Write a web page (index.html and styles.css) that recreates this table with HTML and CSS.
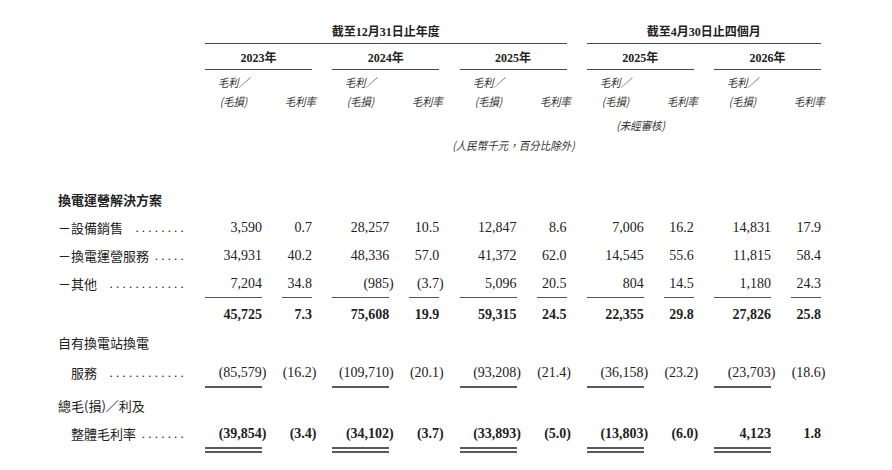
FILE: index.html
```html
<!DOCTYPE html>
<html lang="zh-Hant">
<head>
<meta charset="utf-8">
<title>毛利表</title>
<link rel="stylesheet" href="styles.css">
</head>
<body>
<div class="page">
  <div class="hrow h1">
    <div class="lbl"></div>
    <div class="grps">
      <div class="span3">截至12月31日止年度</div>
      <div class="span2">截至4月30日止四個月</div>
    </div>
  </div>
  <div class="hrow h2">
    <div class="lbl"></div>
    <div class="grps">
      <div class="yr">2023年</div>
      <div class="yr">2024年</div>
      <div class="yr">2025年</div>
      <div class="yr">2025年</div>
      <div class="yr">2026年</div>
    </div>
  </div>
  <div class="hrow h3">
    <div class="lbl"></div>
    <div class="grps">
      <div class="hgrp"><span class="hamt"><span class="ln">毛利／</span><span class="ln">(毛損)</span></span><span class="hpct">毛利率</span></div>
      <div class="hgrp"><span class="hamt"><span class="ln">毛利／</span><span class="ln">(毛損)</span></span><span class="hpct">毛利率</span></div>
      <div class="hgrp"><span class="hamt"><span class="ln">毛利／</span><span class="ln">(毛損)</span></span><span class="hpct">毛利率</span></div>
      <div class="hgrp"><span class="hamt"><span class="ln">毛利／</span><span class="ln">(毛損)</span></span><span class="hpct">毛利率</span></div>
      <div class="hgrp"><span class="hamt"><span class="ln">毛利／</span><span class="ln">(毛損)</span></span><span class="hpct">毛利率</span></div>
    </div>
  </div>
  <div class="hrow h4">
    <div class="lbl"></div>
    <div class="grps">
      <div class="note"></div>
      <div class="note"></div>
      <div class="note"></div>
      <div class="note"><span class="nt">(未經審核)</span></div>
      <div class="note"></div>
    </div>
  </div>
  <div class="hrow h5">
    <div class="lbl"></div>
    <div class="grps">
      <div class="note"></div>
      <div class="note"></div>
      <div class="note"><span class="nt">(人民幣千元，百分比除外)</span></div>
      <div class="note"></div>
      <div class="note"></div>
    </div>
  </div>

  <div class="row sec first">
    <div class="lbl"><span class="t b">換電運營解決方案</span></div>
  </div>

  <div class="row">
    <div class="lbl"><span class="t">－設備銷售</span><span class="dots">........</span></div>
    <div class="grps">
      <div class="grp"><span class="amt">3,590</span><span class="pct">0.7</span></div>
      <div class="grp"><span class="amt">28,257</span><span class="pct">10.5</span></div>
      <div class="grp"><span class="amt">12,847</span><span class="pct">8.6</span></div>
      <div class="grp"><span class="amt">7,006</span><span class="pct">16.2</span></div>
      <div class="grp"><span class="amt">14,831</span><span class="pct">17.9</span></div>
    </div>
  </div>

  <div class="row">
    <div class="lbl"><span class="t">－換電運營服務</span><span class="dots">.....</span></div>
    <div class="grps">
      <div class="grp"><span class="amt">34,931</span><span class="pct">40.2</span></div>
      <div class="grp"><span class="amt">48,336</span><span class="pct">57.0</span></div>
      <div class="grp"><span class="amt">41,372</span><span class="pct">62.0</span></div>
      <div class="grp"><span class="amt">14,545</span><span class="pct">55.6</span></div>
      <div class="grp"><span class="amt">11,815</span><span class="pct">58.4</span></div>
    </div>
  </div>

  <div class="row ulrow">
    <div class="lbl"><span class="t">－其他</span><span class="dots">............</span></div>
    <div class="grps">
      <div class="grp"><span class="amt ul">7,204</span><span class="pct ul">34.8</span></div>
      <div class="grp"><span class="amt ul">(985<span class="rp">)</span></span><span class="pct ul">(3.7<span class="rp">)</span></span></div>
      <div class="grp"><span class="amt ul">5,096</span><span class="pct ul">20.5</span></div>
      <div class="grp"><span class="amt ul">804</span><span class="pct ul">14.5</span></div>
      <div class="grp"><span class="amt ul">1,180</span><span class="pct ul">24.3</span></div>
    </div>
  </div>

  <div class="row total sub">
    <div class="lbl"></div>
    <div class="grps">
      <div class="grp"><span class="amt">45,725</span><span class="pct">7.3</span></div>
      <div class="grp"><span class="amt">75,608</span><span class="pct">19.9</span></div>
      <div class="grp"><span class="amt">59,315</span><span class="pct">24.5</span></div>
      <div class="grp"><span class="amt">22,355</span><span class="pct">29.8</span></div>
      <div class="grp"><span class="amt">27,826</span><span class="pct">25.8</span></div>
    </div>
  </div>

  <div class="row sec own">
    <div class="lbl"><span class="t">自有換電站換電</span></div>
  </div>

  <div class="row ulrow2">
    <div class="lbl"><span class="t in">服務</span><span class="dots">............</span></div>
    <div class="grps">
      <div class="grp"><span class="amt ul2">(85,579<span class="rp">)</span></span><span class="pct">(16.2<span class="rp">)</span></span></div>
      <div class="grp"><span class="amt ul2">(109,710<span class="rp">)</span></span><span class="pct">(20.1<span class="rp">)</span></span></div>
      <div class="grp"><span class="amt ul2">(93,208<span class="rp">)</span></span><span class="pct">(21.4<span class="rp">)</span></span></div>
      <div class="grp"><span class="amt ul2">(36,158<span class="rp">)</span></span><span class="pct">(23.2<span class="rp">)</span></span></div>
      <div class="grp"><span class="amt ul2">(23,703<span class="rp">)</span></span><span class="pct">(18.6<span class="rp">)</span></span></div>
    </div>
  </div>

  <div class="row sec gap2">
    <div class="lbl"><span class="t">總毛(損)／利及</span></div>
  </div>

  <div class="row dblrow total">
    <div class="lbl"><span class="t in">整體毛利率</span><span class="dots">.......</span></div>
    <div class="grps">
      <div class="grp"><span class="amt dbl">(39,854<span class="rp">)</span></span><span class="pct">(3.4<span class="rp">)</span></span></div>
      <div class="grp"><span class="amt dbl">(34,102<span class="rp">)</span></span><span class="pct">(3.7<span class="rp">)</span></span></div>
      <div class="grp"><span class="amt dbl">(33,893<span class="rp">)</span></span><span class="pct">(5.0<span class="rp">)</span></span></div>
      <div class="grp"><span class="amt dbl">(13,803<span class="rp">)</span></span><span class="pct">(6.0<span class="rp">)</span></span></div>
      <div class="grp"><span class="amt dbl">4,123</span><span class="pct">1.8</span></div>
    </div>
  </div>
</div>
</body>
</html>
```

FILE: styles.css
```css
html, body {
  margin: 0;
  padding: 0;
  background: #ffffff;
}

.page {
  padding: 24px 0 0 58px;
  color: #222222;
  font-family: "Liberation Serif", "Noto Sans CJK TC", serif;
}

.hrow, .row {
  display: flex;
}

.lbl {
  width: 147px;
  flex: none;
  display: flex;
  padding-right: 18px;
  box-sizing: border-box;
  font-family: "Noto Sans CJK TC", sans-serif;
  font-size: 13px;
  white-space: nowrap;
}

.grps {
  display: flex;
  gap: 20.25px;
}

.grp, .hgrp {
  width: 107px;
  flex: none;
  display: flex;
  justify-content: space-between;
}

/* header rows */
.h1 .span3, .h1 .span2 {
  font-weight: bold;
  font-size: 12px;
  line-height: 16px;
  height: 16px;
  text-align: center;
  padding-bottom: 2.5px;
  border-bottom: 1.5px solid #4a4a4a;
}
.h1 .span3 { width: 361.5px; }
.h1 .span2 { width: 234.25px; }

.h2 .yr {
  width: 107px;
  font-weight: bold;
  font-size: 12px;
  line-height: 16px;
  height: 16px;
  text-align: center;
  padding-top: 6px;
  padding-bottom: 3px;
  border-bottom: 1.5px solid #4a4a4a;
}

.h3 {
  padding-top: 3px;
}
.hgrp {
  align-items: flex-end;
}
.hamt, .hpct {
  font-family: "Noto Sans CJK TC", sans-serif;
  font-style: italic;
  font-size: 11.4px;
  line-height: 19px;
  color: #333333;
  white-space: nowrap;
}
.hamt {
  width: 57px;
  text-align: center;
  transform: scaleX(0.9);
}
.hpct {
  width: 30px;
  height: 19px;
  text-align: right;
  transform: scaleX(0.9);
  transform-origin: right center;
}
.ln {
  display: block;
  height: 19px;
}

.h4 {
  margin-top: 4px;
}
.note {
  width: 107px;
  flex: none;
  display: flex;
  justify-content: center;
  font-family: "Noto Sans CJK TC", sans-serif;
  font-style: italic;
  font-size: 11.4px;
  line-height: 20px;
  height: 20px;
  color: #333333;
  white-space: nowrap;
}
.nt {
  display: inline-block;
  transform: scaleX(0.92);
}

/* body rows */
.row .lbl {
  line-height: 28px;
}
.row.first {
  margin-top: 31px;
}
.t {
  flex: none;
}
.t.b {
  font-weight: bold;
}
.t.in {
  padding-left: 13px;
}
.dots {
  flex: 1;
  text-align: right;
  font-family: "Liberation Serif", serif;
  font-size: 13px;
  letter-spacing: 3.2px;
  overflow: hidden;
}

.amt, .pct {
  text-align: right;
  font-size: 14px;
  line-height: 28px;
  white-space: nowrap;
}
.amt { width: 57px; }
.pct { width: 30px; }

.rp {
  margin-right: -4.5px;
}

.ulrow .amt, .ulrow .pct {
  padding-top: 2px;
  line-height: 24px;
}
.ul {
  border-bottom: 1.5px solid #555555;
}

.total .amt, .total .pct {
  font-weight: bold;
}
.row.sub {
  margin-top: 5.5px;
}
.sub .amt, .sub .pct {
  line-height: 24px;
}

.row.own {
  padding-top: 2px;
}

.row.ulrow2 {
  margin-top: 1px;
}
.ulrow2 .lbl {
  line-height: 30px;
}
.ulrow2 .amt, .ulrow2 .pct {
  padding-top: 3px;
  line-height: 24px;
}
.ul2 {
  border-bottom: 2px solid #5a5a5a;
}

.row.gap2 {
  margin-top: 4px;
}

.dblrow .amt, .dblrow .pct {
  padding-top: 2px;
  line-height: 24px;
}
.dbl {
  padding-bottom: 1px;
  border-bottom: 6px double #5a5a5a;
}
```
